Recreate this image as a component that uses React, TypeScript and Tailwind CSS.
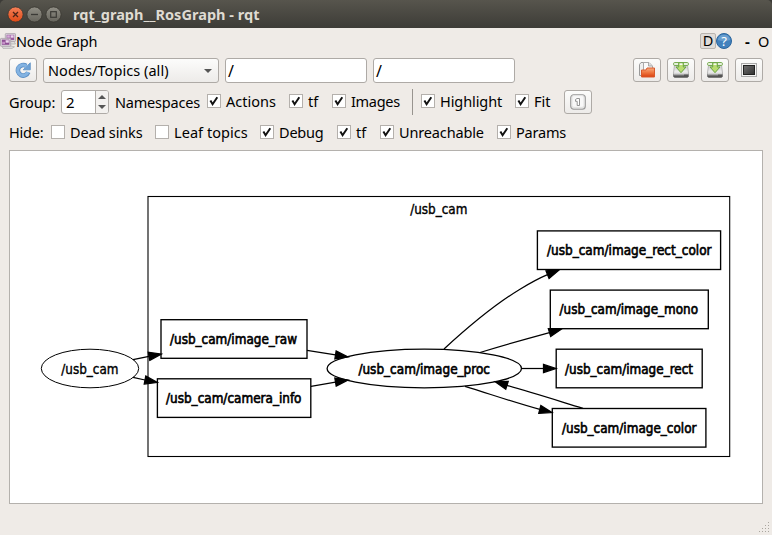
import type { ReactNode } from "react";

const bevel =
  "shrink-0 rounded-[3px] border border-[#aeaaa6] bg-linear-to-b from-[#fcfcfb] to-[#edebe9]";

function Label({ className, children }: { className: string; children: ReactNode }) {
  return <span className={`block shrink-0 whitespace-pre text-[14.5px] leading-[20px] ${className}`}>{children}</span>;
}

function Check({ on, className = "" }: { on?: boolean; className?: string }) {
  return (
    <span className={`block h-[14px] w-[14px] shrink-0 border border-[#b4b0ac] bg-white ${className}`}>
      {on && (
        <svg viewBox="0 0 12 12" className="block h-3 w-3">
          <path d="M2.4 5.4 L4.6 9.2 L9.3 2.3" fill="none" stroke="#111" strokeWidth="2" />
        </svg>
      )}
    </span>
  );
}

function ToolButton({ className = "", children }: { className?: string; children: ReactNode }) {
  return <button className={`flex h-6 w-7 items-center justify-center ${bevel} ${className}`}>{children}</button>;
}

function RefreshIcon() {
  return (
    <svg width="16" height="16" viewBox="0 0 16 16">
      <path d="M13.2 10.2 A5.3 5.3 0 1 1 11.2 3.9" fill="none" stroke="#5c8fc4" strokeWidth="4.6" />
      <path d="M15.3 .8 V7.8 H8.2 L10.6 5.4 L12.6 3.4 Z" fill="#6ea2d6" stroke="#5c8fc4" strokeWidth=".8" />
      <path d="M13 10 A5.3 5.3 0 1 1 11.6 4.3" fill="none" stroke="#83b3e2" strokeWidth="3" />
    </svg>
  );
}

function FolderIcon() {
  return (
    <svg width="16" height="16" viewBox="0 0 16 16">
      <defs>
        <linearGradient id="folder" x1="0" y1="0" x2="0" y2="1">
          <stop offset="0" stopColor="#f7ad80" />
          <stop offset=".5" stopColor="#ee7640" />
          <stop offset="1" stopColor="#d9400f" />
        </linearGradient>
      </defs>
      <path d="M.5 13.5 V2.5 L2 .5 H6 V13.5 Z" fill="#eee" stroke="#999" />
      <path d="M4.5 12 V.5 H10 L13.5 4 V12 Z" fill="#fafafa" stroke="#aaa" />
      <path d="M9.5 .5 V4 H13" fill="#ddd" stroke="#999" strokeWidth=".8" />
      <path d="M2.5 15 V8 H7 L8 6 H15.5 V15 Z" fill="url(#folder)" stroke="#d95a2c" />
    </svg>
  );
}

function SaveIcon({ id }: { id: string }) {
  return (
    <svg width="16" height="16" viewBox="0 0 16 16">
      <defs>
        <linearGradient id={id} x1="0" y1="0" x2="0" y2="1">
          <stop offset="0" stopColor="#c8c8c8" />
          <stop offset=".7" stopColor="#eee" />
          <stop offset="1" stopColor="#bbb" />
        </linearGradient>
      </defs>
      <path d="M1.5 3 H14.5 L15.5 11 V13 H.5 V11 Z" fill={`url(#${id})`} stroke="#aaa" strokeWidth=".8" />
      <path d="M.3 12.4 H15.7 V14.5 L14.5 15.8 H1.5 L.3 14.5 Z" fill="#555" />
      <path d="M1 12.8 H11" stroke="#bbb" />
      <rect x=".6" y=".6" width="14.8" height="2.8" rx="1" fill="#f4f8ee" stroke="#6ba541" />
      <path d="M5.7 1 H10.3 V5 H13 L8 10.7 L3 5 H5.7 Z" fill="#b9dc70" stroke="#6ba541" />
      <path d="M6.5 1.3 H9.5 V3 H6.5 Z" fill="#f4f8ee" />
    </svg>
  );
}

function ScreenIcon() {
  return (
    <svg width="16" height="16" viewBox="0 0 16 16">
      <defs>
        <linearGradient id="screen" x1="0" y1="0" x2="1" y2="1">
          <stop offset="0" stopColor="#707070" />
          <stop offset="1" stopColor="#303030" />
        </linearGradient>
      </defs>
      <rect x=".5" y="1.5" width="15" height="13" fill="#f3f3f2" stroke="#aaa" />
      <rect x="2.5" y="3.5" width="11" height="9" fill="url(#screen)" stroke="#222" />
    </svg>
  );
}

function OneIcon() {
  return (
    <svg width="16" height="16" viewBox="0 0 16 16">
      <rect x=".7" y=".7" width="14.6" height="14.6" rx="3" fill="#e4e4e3" stroke="#999" strokeWidth="1.1" />
      <rect x="2" y="1.6" width="12" height="11.8" rx="2" fill="#f8f8f8" stroke="#e2e2e2" />
      <path d="M5.5 5.5 L7 4.5 H9.5 V11.5 H7.2 V7.3 H5.5 Z" fill="#fff" stroke="#888" strokeWidth=".9" />
    </svg>
  );
}

function NodesIcon() {
  return (
    <svg width="16" height="16" viewBox="0 0 16 16" className="block shrink-0">
      <path d="M8 8 H14 L15.5 11 H7 Z" fill="#ddd" stroke="#aaa" strokeWidth=".7" />
      <rect x="5.3" y=".6" width="10.2" height="7.8" rx=".6" fill="#dcd8dc" stroke="#a9a0aa" strokeWidth=".8" />
      <rect x="6.6" y="1.8" width="7.6" height="5.2" fill="#9c5ba2" />
      <rect x="7.2" y="2.3" width="2.6" height="2.4" fill="#d9b0dc" />
      <rect x="10.6" y="2.3" width="3" height="2.4" fill="#ecd6ee" />
      <path d="M2 13 H11 L14.5 13.8 L12 15.4 H3 Z" fill="#ddd" stroke="#aaa" strokeWidth=".7" />
      <rect x=".5" y="5.4" width="10.2" height="7.8" rx=".6" fill="#dcd8dc" stroke="#a9a0aa" strokeWidth=".8" />
      <rect x="1.8" y="6.6" width="7.6" height="5.2" fill="#8e4f94" />
      <rect x="2.2" y="8.8" width="2.8" height="2.3" fill="#c590c8" />
      <rect x="5.6" y="7.2" width="3.2" height="2.5" fill="#ecd6ee" />
    </svg>
  );
}

function TitleBar() {
  return (
    <div className="flex h-7 items-center rounded-t-[5px] bg-linear-to-b from-[#57554d] to-[#3d3c37] pl-[7px]">
      <svg width="56" height="18" viewBox="0 0 56 18" className="block shrink-0">
        <defs>
          <linearGradient id="close" x1="0" y1="0" x2="0" y2="1">
            <stop offset="0" stopColor="#f58058" />
            <stop offset="1" stopColor="#df4a16" />
          </linearGradient>
          <linearGradient id="grey" x1="0" y1="0" x2="0" y2="1">
            <stop offset="0" stopColor="#918f86" />
            <stop offset="1" stopColor="#66645c" />
          </linearGradient>
        </defs>
        <circle cx="8.5" cy="9.5" r="7.6" fill="url(#close)" stroke="#383630" strokeWidth=".8" />
        <circle cx="27.5" cy="9.5" r="7.6" fill="url(#grey)" stroke="#383630" strokeWidth=".8" />
        <circle cx="46.5" cy="9.5" r="7.6" fill="url(#grey)" stroke="#383630" strokeWidth=".8" />
        <path d="M6 7 L11 12 M11 7 L6 12" stroke="#4b2418" strokeWidth="1.3" />
        <path d="M24 9.5 H31" stroke="#3b3a36" strokeWidth="1.3" />
        <rect x="43.7" y="6.7" width="5.6" height="5.6" fill="none" stroke="#3b3a36" strokeWidth="1.2" />
      </svg>
      <span className="ml-[10px] whitespace-pre text-[14.5px] leading-5 font-bold tracking-[0.03px] text-[#dfdbd2]">
        rqt_graph__RosGraph - rqt
      </span>
    </div>
  );
}

type Box = { x: number; y: number; w: number; text: string; tx: number; tw: number };

const boxes: Box[] = [
  { x: 161, y: 319.7, w: 146, text: "/usb_cam/image_raw", tx: 170, tw: 127 },
  { x: 157.4, y: 378.8, w: 153.4, text: "/usb_cam/camera_info", tx: 166, tw: 135.5 },
  { x: 537.4, y: 230.9, w: 183.2, text: "/usb_cam/image_rect_color", tx: 547, tw: 164.5 },
  { x: 550.3, y: 290.1, w: 158, text: "/usb_cam/image_mono", tx: 559.5, tw: 138.5 },
  { x: 556.2, y: 349.2, w: 146, text: "/usb_cam/image_rect", tx: 565, tw: 128 },
  { x: 552.3, y: 408.5, w: 153.6, text: "/usb_cam/image_color", tx: 562, tw: 134.5 },
];

// Each edge is its line, then the head's base point and its tip.
const edges: [string, number, number, number, number][] = [
  ["M133 359.7 L149 356.3", 149, 356.3, 161.3, 354],
  ["M133 377.4 L145 380", 145, 380, 157.3, 382.4],
  ["M307 350.3 L335.5 354.9", 335.5, 354.9, 348, 356.9],
  ["M311 386.3 L335.5 382.1", 335.5, 382.1, 348, 380],
  ["M444 349 C463 331.5 489 308 520 289.2 C529 283.7 538 278.6 547.5 274.6", 547.5, 274.6, 559.3, 269.8],
  ["M480 352.5 C503 345.5 527 338.7 549.5 332.6", 549.5, 332.6, 561.5, 329],
  ["M521.6 368.5 H543.5", 543.5, 368.5, 556, 368.5],
  ["M465 386.3 C490 394 516 403 539.8 409.4", 539.8, 409.4, 552, 412.6],
  ["M583 408.3 C558 400.7 532 392.5 507 385.4", 507, 385.4, 495, 381.6],
];

function head(bx: number, by: number, tx: number, ty: number) {
  const len = Math.hypot(tx - bx, ty - by);
  const nx = (-(ty - by) / len) * 4.1;
  const ny = ((tx - bx) / len) * 4.1;
  return `${bx + nx},${by + ny} ${tx},${ty} ${bx - nx},${by - ny}`;
}

function NodeText({ x, y, w, heavy = true, children }: { x: number; y: number; w: number; heavy?: boolean; children: string }) {
  return (
    <text
      x={x}
      y={y}
      textLength={w}
      lengthAdjust="spacingAndGlyphs"
      fontSize="13.2"
      stroke="#000"
      strokeWidth={heavy ? 0.65 : 0.4}
      className="font-['DejaVu_Sans',sans-serif]"
    >
      {children}
    </text>
  );
}

function Graph() {
  return (
    <svg width="752" height="352" viewBox="10 151 752 352" className="block">
      <rect x="148" y="196.5" width="581.7" height="260" fill="none" stroke="#000" strokeWidth="1.1" />
      <g fill="#fff" stroke="#000">
        <ellipse cx="90" cy="368.5" rx="48.7" ry="19.3" strokeWidth="1" />
        <ellipse cx="424.3" cy="368.5" rx="97.2" ry="19.3" strokeWidth="1.3" />
        {boxes.map((b) => (
          <rect key={b.text} x={b.x} y={b.y} width={b.w} height="38.6" strokeWidth="1.35" />
        ))}
      </g>
      {edges.map(([d, bx, by, tx, ty]) => (
        <g key={d} stroke="#000" strokeWidth="1.25">
          <path d={d} fill="none" />
          <polygon points={head(bx, by, tx, ty)} />
        </g>
      ))}
      {boxes.map((b) => (
        <NodeText key={b.text} x={b.tx} y={b.y + 24.3} w={b.tw}>{b.text}</NodeText>
      ))}
      <NodeText x={61.3} y={373.5} w={57.2} heavy={false}>/usb_cam</NodeText>
      <NodeText x={410.2} y={214.3} w={57.2} heavy={false}>/usb_cam</NodeText>
      <NodeText x={358.4} y={373.5} w={131.6}>/usb_cam/image_proc</NodeText>
    </svg>
  );
}

function SizeGrip() {
  const dots = [[9, 0], [6, 3], [9, 3], [3, 6], [6, 6], [9, 6], [0, 9], [3, 9], [6, 9], [9, 9]];
  return (
    <svg width="11" height="11" viewBox="0 0 11 11" className="block">
      {dots.map(([x, y]) => (
        <rect key={`${x}-${y}`} x={x} y={y} width="1" height="1" fill="#aaa69f" />
      ))}
    </svg>
  );
}

export default function App() {
  return (
    <div className="h-[535px] w-[772px] overflow-hidden bg-[#3c3b37] font-['Noto_Sans',sans-serif] text-black">
      <TitleBar />
      <div className="flex h-[507px] flex-col bg-[#efebe7]">
        <div className="flex h-[30px] shrink-0 items-start pt-[5px]">
          <NodesIcon />
          <Label className="-mt-[2px] w-[120px] tracking-[-0.15px]">Node Graph</Label>
          <span className="ml-auto flex h-4 w-4 items-center justify-center rounded-[2px] border border-[#b9b4af] bg-[#e0dcd8] text-[14.5px]">D</span>
          <svg width="16" height="16" viewBox="0 0 16 16" className="block shrink-0">
            <circle cx="8" cy="8" r="7.5" fill="#4382bd" stroke="#2b659d" />
            <path d="M1.8 7 A6.3 6.3 0 0 1 14.2 7 Q8 9 1.8 7 Z" fill="#699fd0" />
            <text x="8" y="12.6" textAnchor="middle" fontSize="13" fill="#fff">?</text>
          </svg>
          <span className="ml-[13px] w-[13px] text-[15px] leading-[17px] font-bold">-</span>
          <span className="w-[14px] text-[14.5px] leading-[17px]">O</span>
        </div>
        <div className="flex h-[25px] shrink-0 items-start pr-[9px] pl-[9px]">
          <ToolButton><RefreshIcon /></ToolButton>
          <div className={`ml-[6px] flex h-[25px] w-[176px] items-center justify-between pr-[6px] pl-[4px] ${bevel}`}>
            <Label className="-mt-px tracking-[0.05px]">Nodes/Topics (all)</Label>
            <svg width="8" height="4" viewBox="0 0 8 4"><path d="M0 0 H8 L4 4 Z" fill="#555" /></svg>
          </div>
          {["a", "b"].map((k) => (
            <div key={k} className="ml-[6px] flex h-[25px] w-[142px] shrink-0 items-center rounded-[3px] border border-[#aeaaa6] bg-white pl-[2px] text-[16px]">/</div>
          ))}
          <div className="ml-auto flex gap-[6px]">
            <ToolButton><FolderIcon /></ToolButton>
            <ToolButton><SaveIcon id="save-dot" /></ToolButton>
            <ToolButton><SaveIcon id="save-svg" /></ToolButton>
            <ToolButton><ScreenIcon /></ToolButton>
          </div>
        </div>
        <div className="mt-[6px] flex h-[26px] shrink-0 items-center pl-[9px]">
          <Label className="w-[52px] tracking-[-0.1px]">Group:</Label>
          <div className="flex h-6 w-[48px] shrink-0 overflow-hidden rounded-[3px] border border-[#aeaaa6] bg-white">
            <span className="w-[33px] pl-1 text-[15px] leading-[23px]">2</span>
            <span className="flex flex-1 flex-col items-center justify-center gap-[6px] border-l border-[#aeaaa6] bg-[#f3f1ef]">
              <svg width="8" height="4" viewBox="0 0 8 4"><path d="M0 4 H8 L4 0 Z" fill="#555" /></svg>
              <svg width="8" height="4" viewBox="0 0 8 4"><path d="M0 0 H8 L4 4 Z" fill="#555" /></svg>
            </span>
          </div>
          <Label className="ml-[6px] w-[92px] tracking-[-0.2px]">Namespaces</Label>
          <Check on className="-mt-[2px]" />
          <Label className="-mt-[2px] ml-[5px] w-[63px]">Actions</Label>
          <Check on className="-mt-[2px]" />
          <Label className="-mt-[2px] ml-[5px] w-[24px]">tf</Label>
          <Check on className="-mt-[2px]" />
          <Label className="-mt-[2px] ml-[5px] w-[61px] tracking-[-0.3px]">Images</Label>
          <span className="h-[26px] w-px shrink-0 bg-[#98948f]" />
          <Check on className="-mt-[2px] ml-[8px]" />
          <Label className="-mt-[2px] ml-[5px] w-[75px] tracking-[-0.08px]">Highlight</Label>
          <Check on className="-mt-[2px]" />
          <Label className="-mt-[2px] ml-[5px] w-[30px]">Fit</Label>
          <ToolButton><OneIcon /></ToolButton>
        </div>
        <div className="mt-[7px] flex h-5 shrink-0 items-center pl-[9px]">
          <Label className="w-[42px] tracking-[-0.2px]">Hide:</Label>
          <Check />
          <Label className="ml-[5px] w-[85px] tracking-[-0.15px]">Dead sinks</Label>
          <Check />
          <Label className="ml-[5px] w-[86px] tracking-[0.05px]">Leaf topics</Label>
          <Check on />
          <Label className="ml-[5px] w-[58px] tracking-[-0.2px]">Debug</Label>
          <Check on />
          <Label className="ml-[5px] w-[24px]">tf</Label>
          <Check on />
          <Label className="ml-[5px] w-[98px] tracking-[-0.15px]">Unreachable</Label>
          <Check on />
          <Label className="ml-[5px] w-[60px] tracking-[-0.2px]">Params</Label>
        </div>
        <div className="mt-[8px] ml-[9px] h-[354px] w-[754px] shrink-0 border border-[#b4b1ad] bg-white">
          <Graph />
        </div>
        <div className="flex flex-1 items-end justify-end pr-[2px] pb-[2px]">
          <SizeGrip />
        </div>
      </div>
    </div>
  );
}
